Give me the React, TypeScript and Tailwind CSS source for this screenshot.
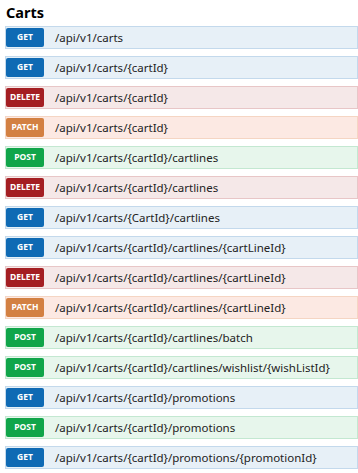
const rows: [string, string][] = [
  ["GET", "/api/v1/carts"],
  ["GET", "/api/v1/carts/{cartId}"],
  ["DELETE", "/api/v1/carts/{cartId}"],
  ["PATCH", "/api/v1/carts/{cartId}"],
  ["POST", "/api/v1/carts/{cartId}/cartlines"],
  ["DELETE", "/api/v1/carts/{cartId}/cartlines"],
  ["GET", "/api/v1/carts/{CartId}/cartlines"],
  ["GET", "/api/v1/carts/{cartId}/cartlines/{cartLineId}"],
  ["DELETE", "/api/v1/carts/{cartId}/cartlines/{cartLineId}"],
  ["PATCH", "/api/v1/carts/{cartId}/cartlines/{cartLineId}"],
  ["POST", "/api/v1/carts/{cartId}/cartlines/batch"],
  ["POST", "/api/v1/carts/{cartId}/cartlines/wishlist/{wishListId}"],
  ["GET", "/api/v1/carts/{cartId}/promotions"],
  ["POST", "/api/v1/carts/{cartId}/promotions"],
  ["GET", "/api/v1/carts/{cartId}/promotions/{promotionId}"],
];

const styles: Record<string, { row: string; badge: string }> = {
  GET: { row: "bg-[#e7f0f7] border-[#c3d9ec]", badge: "bg-[#0f6ab4]" },
  DELETE: { row: "bg-[#f5e8e8] border-[#e8c6c7]", badge: "bg-[#a41e22]" },
  PATCH: { row: "bg-[#fce9e3] border-[#f5d5c3]", badge: "bg-[#d38042]" },
  POST: { row: "bg-[#e7f6ec] border-[#c3e8d1]", badge: "bg-[#10a54a]" },
};

export default function App() {
  return (
    <div className="w-[358px] h-[473px] bg-white overflow-hidden pl-[5px] font-['Noto_Sans',sans-serif]">
      <h2 className="text-[14.5px] leading-[18px] font-bold text-[#000] pt-[3px] pl-[1px] h-[26px]">Carts</h2>
      <ul className="flex flex-col gap-[7px]">
        {rows.map(([method, path], i) => (
          <li key={i} className={`h-[23px] border flex items-center ${styles[method].row}`}>
            <span
              className={`w-[38px] h-[19px] shrink-0 rounded-[2px] flex items-center justify-center text-white text-[8.5px] font-bold ${styles[method].badge}`}
            >
              {method}
            </span>
            <span className="ml-[11px] text-[11.5px] text-[#222] whitespace-nowrap">{path}</span>
          </li>
        ))}
      </ul>
    </div>
  );
}
